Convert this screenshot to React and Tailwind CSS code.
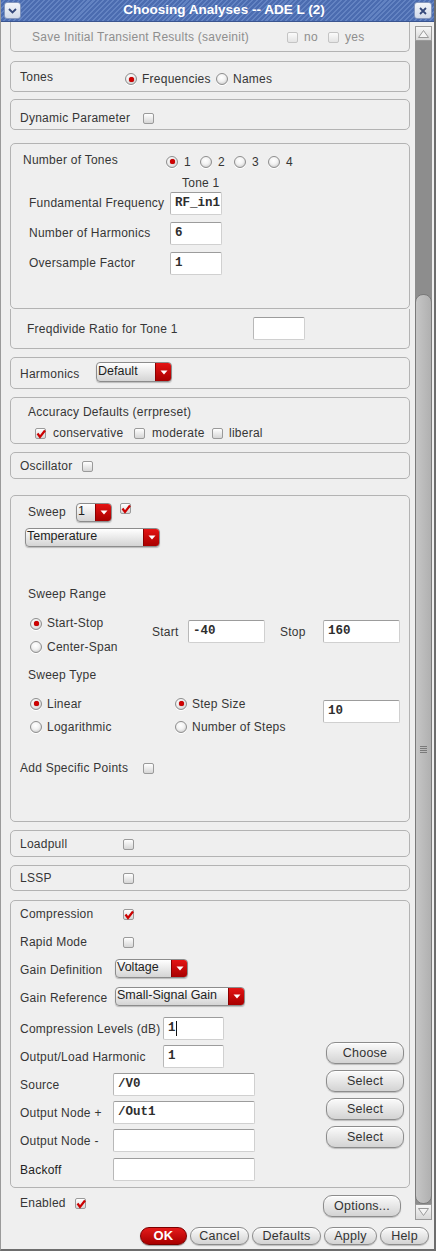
import React from "react";

const T = "font-['Liberation_Sans',Arial,sans-serif] text-[12px] tracking-[0.25px] text-[#363636]";

function Radio({ on }) {
  return (
    <span className="relative inline-block w-[12px] h-[12px] shrink-0 rounded-full border border-[#8e8e8e] bg-[radial-gradient(circle_at_45%_35%,#ffffff_0%,#f2f2f2_45%,#bdbdbd_100%)] shadow-[0_1px_0_#ffffff]">
      {on && <span className="absolute left-[2.5px] top-[2.5px] w-[5px] h-[5px] rounded-full bg-[#d00000] shadow-[0_0_1px_#700000]" />}
    </span>
  );
}

function Check({ on, dis }) {
  return (
    <span className={"relative inline-block w-[11px] h-[11px] shrink-0 rounded-[2px] border bg-gradient-to-b " + (dis ? "border-[#c4c4c4] from-[#fbfbfb] to-[#e4e4e4]" : "border-[#9a9a9a] from-[#ffffff] to-[#d6d6d6]")}>
      {on && (
        <svg className="absolute left-[0px] top-[0px]" width="10" height="10" viewBox="0 0 10 10">
          <path d="M1.5 4.5 L4 8 L9 1.5" stroke="#cc0000" strokeWidth="2.2" fill="none" />
        </svg>
      )}
    </span>
  );
}

function Combo({ text, w, h = "h-[20px]" }) {
  return (
    <div className={"flex shrink-0 rounded-[4px] border border-[#8c8c8c] overflow-hidden bg-gradient-to-b from-[#ffffff] to-[#d4d4d4] shadow-[0_1px_1px_#bbbbbb] " + w + " " + h}>
      <span className="flex-1 pl-[1px] flex items-center text-[12.5px] tracking-normal text-[#1e1e1e] -mt-[2px]">{text}</span>
      <span className="w-[16px] flex items-center justify-center bg-gradient-to-b from-[#e41414] to-[#a80000] border-l border-[#8a0000]">
        <svg width="8" height="5" viewBox="0 0 8 5"><path d="M0.5 0.5 L7.5 0.5 L4 4.5 Z" fill="#ffffff" /></svg>
      </span>
    </div>
  );
}

function Input({ value, w, cursor }) {
  return (
    <div className={"h-[23px] shrink-0 bg-white rounded-[2px] border border-[#d0d0d0] border-t-[#9c9c9c] border-l-[#b8b8b8] flex items-center pl-[4px] font-['Liberation_Mono',monospace] font-bold text-[12.5px] tracking-normal text-[#2e2e2e] " + w}>
      {value}
      {cursor && <span className="w-[1px] h-[15px] bg-[#111] ml-[0px]" />}
    </div>
  );
}

function Btn({ text, w, h = "h-[22px]" }) {
  return (
    <div className={"shrink-0 rounded-[9px] border border-[#8c8c8c] bg-gradient-to-b from-[#fbfbfb] to-[#d3d3d3] flex items-center justify-center text-[12.5px] text-[#333] shadow-[inset_0_1px_0_#ffffff,0_1px_1px_#bdbdbd] " + w + " " + h}>
      {text}
    </div>
  );
}

const P = "rounded-[5px] border border-[#b3b3b3]";

export default function App() {
  return (
    <div className={"w-[436px] h-[1251px] bg-[#efefef] flex flex-col overflow-hidden border-l border-[#9a9a9a] border-r-2 border-r-[#6d6d6d] border-b-2 border-b-[#6d6d6d] " + T}>
      {/* Title bar */}
      <div className="h-[22px] shrink-0 flex items-center relative bg-[repeating-linear-gradient(135deg,#4b6cb0_0px,#4b6cb0_2px,#6383c2_2px,#6383c2_3.5px)] border-b border-[#3a5590]">
        <div className="ml-[3px] w-[17px] h-[17px] rounded-[3px] border border-[#8396bd] bg-gradient-to-b from-[#f2f5fa] to-[#d2dae9] flex items-center justify-center">
          <svg width="9" height="6" viewBox="0 0 9 6"><path d="M1 1 L4.5 4.5 L8 1" stroke="#34487a" strokeWidth="1.8" fill="none" /></svg>
        </div>
        <div className="flex-1 text-center text-white font-bold text-[13.5px] tracking-normal font-['Liberation_Sans',Arial,sans-serif] pl-[13px]">Choosing Analyses -- ADE L (2)</div>
        <div className="mr-[2px] w-[18px] h-[17px] rounded-[3px] border border-[#8396bd] bg-gradient-to-b from-[#f2f5fa] to-[#d2dae9] flex items-center justify-center">
          <svg width="8" height="8" viewBox="0 0 8 8"><path d="M1 1 L7 7 M7 1 L1 7" stroke="#34487a" strokeWidth="1.8" /></svg>
        </div>
      </div>

      {/* middle */}
      <div className="flex h-[1199px] shrink-0">
        <div className="w-[414px] shrink-0 pl-[9px] pr-[5px] overflow-hidden flex flex-col">
          {/* P1 */}
          <div className="h-[30px] shrink-0 border-x border-b border-[#b3b3b3] rounded-b-[5px] pt-[7px] pl-[21px] flex">
            <div className="h-[16px] flex items-center text-[#8e8e8e]">
              <span className="w-[255px]">Save Initial Transient Results (saveinit)</span>
              <span className="w-[41px] flex items-center gap-[6px]"><Check dis /><span>no</span></span>
              <span className="flex items-center gap-[6px]"><Check dis /><span>yes</span></span>
            </div>
          </div>

          {/* Tones */}
          <div className={P + " h-[31px] mt-[9px] shrink-0 flex items-center pl-[9px]"}>
            <span className="w-[105px] mt-[1px]">Tones</span>
            <span className="flex items-center mt-[5px]">
              <Radio on /><span className="ml-[5px] w-[74px]">Frequencies</span>
              <Radio /><span className="ml-[5px]">Names</span>
            </span>
          </div>

          {/* Dynamic Parameter */}
          <div className={P + " h-[31px] mt-[7px] shrink-0 pt-[10px] pl-[9px]"}>
            <div className="h-[16px] flex items-center">
              <span className="w-[123px]">Dynamic Parameter</span>
              <Check />
            </div>
          </div>

          {/* Tones block */}
          <div className={P + " h-[166px] mt-[13px] shrink-0 flex flex-col"}>
            <div className="mt-[7px] h-[19px] flex items-center pl-[12px]">
              <span className="w-[143px] -mt-[2px]">Number of Tones</span>
              {["1", "2", "3", "4"].map((n, i) => (
                <span key={n} className="w-[34px] flex items-center mt-[2px]">
                  <Radio on={i === 0} />
                  <span className="ml-[6px]">{n}</span>
                </span>
              ))}
            </div>
            <div className="mt-[6px] h-[14px] leading-[14px] pl-[171px]">Tone 1</div>
            {[["Fundamental Frequency", "RF_in1"], ["Number of Harmonics", "6"], ["Oversample Factor", "1"]].map(([l, v], i) => (
              <div key={l} className={"h-[23px] flex items-center pl-[18px] " + (i === 0 ? "mt-[2px]" : "mt-[7px]")}>
                <span className="w-[141px] -mt-[2px]">{l}</span>
                <Input value={v} w="w-[52px]" />
              </div>
            ))}
          </div>
          <div className="h-[40px] shrink-0 border-x border-b border-[#b3b3b3] rounded-b-[5px] flex items-center pl-[16px]">
            <span className="w-[226px]">Freqdivide Ratio for Tone 1</span>
            <Input value="" w="w-[52px]" />
          </div>

          {/* Harmonics */}
          <div className={P + " h-[32px] mt-[8px] shrink-0 pt-[4px] pl-[9px] flex"}>
            <div className="h-[20px] flex items-center">
              <span className="w-[76px] mt-[3px]">Harmonics</span>
              <Combo text="Default" w="w-[76px]" />
            </div>
          </div>

          {/* Accuracy */}
          <div className={P + " h-[47px] mt-[8px] shrink-0 pt-[6px] pl-[17px]"}>
            <div className="h-[16px] flex items-center">Accuracy Defaults (errpreset)</div>
            <div className="h-[16px] mt-[5px] flex items-center pl-[7px]">
              <Check on /><span className="ml-[7px] w-[81px]">conservative</span>
              <Check /><span className="ml-[7px] w-[60px]">moderate</span>
              <Check /><span className="ml-[6px]">liberal</span>
            </div>
          </div>

          {/* Oscillator */}
          <div className={P + " h-[27px] mt-[8px] shrink-0 pt-[5px] pl-[9px]"}>
            <div className="h-[16px] flex items-center">
              <span className="w-[62px]">Oscillator</span>
              <Check />
            </div>
          </div>

          {/* Sweep */}
          <div className={P + " h-[327px] mt-[16px] shrink-0 flex flex-col"}>
            <div className="mt-[7px] h-[19px] flex items-center pl-[17px]">
              <span className="w-[48px] -mt-[1px]">Sweep</span>
              <Combo text="1" w="w-[36px]" h="h-[19px]" />
              <span className="ml-[8px] -mt-[6px]"><Check on /></span>
            </div>
            <div className="mt-[6px] h-[19px] flex items-center pl-[14px]">
              <Combo text="Temperature" w="w-[135px]" h="h-[19px]" />
            </div>
            <div className="mt-[39px] h-[16px] flex items-center pl-[17px]">Sweep Range</div>
            <div className="mt-[10px] h-[46px] flex pl-[19px]">
              <div className="w-[122px] flex flex-col">
                <div className="h-[23px] flex items-center"><Radio on /><span className="ml-[5px] -mt-[2px]">Start-Stop</span></div>
                <div className="h-[23px] flex items-center"><Radio /><span className="ml-[5px]">Center-Span</span></div>
              </div>
              <div className="mt-[8px] h-[23px] flex items-center">
                <span className="w-[36px]">Start</span>
                <Input value="-40" w="w-[77px]" />
                <span className="ml-[15px] w-[43px]">Stop</span>
                <Input value="160" w="w-[77px]" />
              </div>
            </div>
            <div className="mt-[9px] h-[16px] flex items-center pl-[17px]">Sweep Type</div>
            <div className="mt-[9px] h-[46px] flex pl-[19px]">
              <div className="w-[145px] flex flex-col">
                <div className="h-[23px] flex items-center"><Radio on /><span className="ml-[5px]">Linear</span></div>
                <div className="h-[23px] flex items-center"><Radio /><span className="ml-[5px]">Logarithmic</span></div>
              </div>
              <div className="w-[148px] flex flex-col">
                <div className="h-[23px] flex items-center"><Radio on /><span className="ml-[5px]">Step Size</span></div>
                <div className="h-[23px] flex items-center"><Radio /><span className="ml-[5px]">Number of Steps</span></div>
              </div>
              <div className="mt-[8px]"><Input value="10" w="w-[77px]" /></div>
            </div>
            <div className="mt-[22px] h-[16px] flex items-center pl-[9px]">
              <span className="w-[123px]">Add Specific Points</span>
              <Check />
            </div>
          </div>

          {/* Loadpull */}
          <div className={P + " h-[27px] mt-[8px] shrink-0 pt-[5px] pl-[9px]"}>
            <div className="h-[16px] flex items-center">
              <span className="w-[103px]">Loadpull</span>
              <Check />
            </div>
          </div>
          {/* LSSP */}
          <div className={P + " h-[26px] mt-[8px] shrink-0 pt-[4px] pl-[9px]"}>
            <div className="h-[16px] flex items-center">
              <span className="w-[103px]">LSSP</span>
              <Check />
            </div>
          </div>

          {/* Compression */}
          <div className={P + " h-[288px] mt-[9px] shrink-0 flex flex-col pl-[9px]"}>
            <div className="mt-[5px] h-[16px] flex items-center">
              <span className="w-[103px]">Compression</span>
              <Check on />
            </div>
            <div className="mt-[12px] h-[16px] flex items-center">
              <span className="w-[103px]">Rapid Mode</span>
              <Check />
            </div>
            <div className="mt-[9px] h-[19px] flex items-center">
              <span className="w-[95px] mt-[3px]">Gain Definition</span>
              <Combo text="Voltage" w="w-[73px]" h="h-[19px]" />
            </div>
            <div className="mt-[9px] h-[19px] flex items-center">
              <span className="w-[95px] mt-[3px]">Gain Reference</span>
              <Combo text="Small-Signal Gain" w="w-[130px]" h="h-[19px]" />
            </div>
            <div className="mt-[11px] flex">
              <div className="w-[306px] flex flex-col gap-[5px]">
                <div className="h-[23px] flex items-center"><span className="w-[143px]">Compression Levels (dB)</span><Input value="1" cursor w="w-[61px]" /></div>
                <div className="h-[23px] flex items-center"><span className="w-[143px]">Output/Load Harmonic</span><Input value="1" w="w-[61px]" /></div>
                <div className="h-[23px] flex items-center"><span className="w-[93px]">Source</span><Input value="/V0" w="w-[142px]" /></div>
                <div className="h-[23px] flex items-center"><span className="w-[93px]">Output Node +</span><Input value="/Out1" w="w-[142px]" /></div>
                <div className="h-[23px] flex items-center"><span className="w-[93px]">Output Node -</span><Input value="" w="w-[142px]" /></div>
                <div className="h-[23px] mt-[1px] flex items-center"><span className="w-[93px] text-[#222]">Backoff</span><Input value="" w="w-[142px]" /></div>
              </div>
              <div className="flex flex-col gap-[6px] mt-[25px]">
                <Btn text="Choose" w="w-[78px]" />
                <Btn text="Select" w="w-[78px]" />
                <Btn text="Select" w="w-[78px]" />
                <Btn text="Select" w="w-[78px]" />
              </div>
            </div>
          </div>

          {/* Enabled */}
          <div className="mt-[7px] h-[22px] shrink-0 flex items-start pl-[10px]">
            <div className="w-[303px] h-[16px] flex items-center">
              <span className="w-[55px]">Enabled</span>
              <Check on />
            </div>
            <Btn text="Options..." w="w-[78px]" />
          </div>
        </div>

        {/* scrollbar */}
        <div className="w-[17px] shrink-0 flex flex-col pt-[4px]">
          <div className="h-[15px] border border-[#9a9a9a] bg-gradient-to-b from-[#f6f6f6] to-[#d8d8d8] flex items-center justify-center">
            <svg width="11" height="8" viewBox="0 0 11 8"><path d="M0.5 7.5 L5.5 0.5 L10.5 7.5 Z" fill="#f4f4f4" stroke="#9a9a9a" /></svg>
          </div>
          <div className="flex-1 bg-[#8d8d8d] flex flex-col pt-[253px]">
            <div className="flex-1 rounded-[8px] border border-[#7a7a7a] bg-gradient-to-r from-[#c6c6c6] to-[#b0b0b0] flex items-center justify-center">
              <svg width="9" height="9" viewBox="0 0 9 9"><path d="M1 1.5 H8 M1 3.5 H8 M1 5.5 H8 M1 7.5 H8" stroke="#7a7a7a" strokeWidth="1" /></svg>
            </div>
          </div>
          <div className="h-[16px] mb-[1px] border border-[#9a9a9a] bg-gradient-to-b from-[#f6f6f6] to-[#d8d8d8] flex items-center justify-center">
            <svg width="11" height="8" viewBox="0 0 11 8"><path d="M0.5 0.5 L5.5 7.5 L10.5 0.5 Z" fill="#f4f4f4" stroke="#9a9a9a" /></svg>
          </div>
        </div>
      </div>

      {/* bottom buttons */}
      <div className="flex-1 flex pt-[6px] pl-[139px] gap-[3px]">
        <div className="w-[47px] h-[18px] rounded-[9px] border border-[#7a0000] bg-gradient-to-b from-[#e51a1a] to-[#a80000] flex items-center justify-center text-white font-bold text-[13px] shadow-[0_1px_1px_#999]">OK</div>
        <Btn text="Cancel" w="w-[59px]" h="h-[18px]" />
        <Btn text="Defaults" w="w-[69px]" h="h-[18px]" />
        <Btn text="Apply" w="w-[53px]" h="h-[18px]" />
        <Btn text="Help" w="w-[49px]" h="h-[18px]" />
      </div>
    </div>
  );
}
